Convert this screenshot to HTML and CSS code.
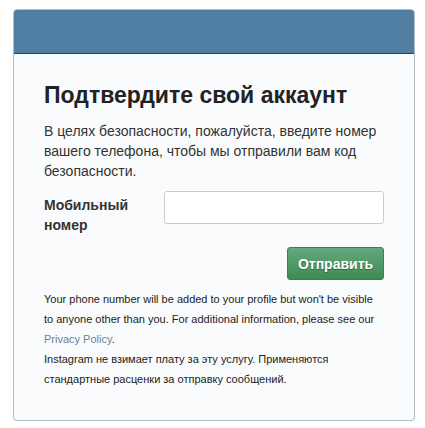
FILE: index.html
```html
<!DOCTYPE html>
<html lang="ru">
<head>
    <meta charset="UTF-8">
    <title>Подтвердите свой аккаунт</title>
    <link rel="stylesheet" href="styles.css">
</head>
<body>
    <div class="card">
        <div class="card-header"></div>
        <div class="card-body">
            <h1>Подтвердите свой аккаунт</h1>
            <p class="intro">В целях безопасности, пожалуйста, введите номер вашего телефона, чтобы мы отправили вам код безопасности.</p>
            <form class="phone-form">
                <div class="field">
                    <label for="phoneInput">Мобильный номер</label>
                    <input type="text" id="phoneInput">
                </div>
                <div class="actions">
                    <button type="button" class="button">Отправить</button>
                </div>
            </form>
            <p class="note">Your phone number will be added to your profile but won't be visible to anyone other than you. For additional information, please see our <a href="#">Privacy Policy</a>.<br>Instagram не взимает плату за эту услугу. Применяются стандартные расценки за отправку сообщений.</p>
        </div>
    </div>
</body>
</html>
```

FILE: styles.css
```css
body {
    font-family: 'Liberation Sans', Arial, sans-serif;
    background-color: #ffffff;
    color: #333333;
    margin: 0;
    padding: 9px 10px 0 13px;
}
.card {
    width: 400px;
    height: 410px;
    background-color: #fafbfc;
    border: 1px solid #b4bec7;
    border-radius: 4px;
    overflow: hidden;
    box-shadow: 0 1px 1px rgba(0, 0, 0, 0.08);
}
.card-header {
    height: 43px;
    background-color: #517fa4;
    border-bottom: 1px solid #23425c;
}
.card-body {
    padding: 27px 30px 0 30px;
}
h1 {
    font-size: 23px;
    font-weight: bold;
    color: #222222;
    margin: 0 0 12px 0;
    line-height: 28px;
}
.intro {
    font-size: 14px;
    line-height: 20px;
    margin: 0 0 10px 0;
    color: #333333;
}
.field {
    display: flex;
    align-items: flex-start;
    justify-content: space-between;
}
.field label {
    width: 100px;
    font-size: 14px;
    font-weight: bold;
    line-height: 20px;
    color: #333333;
    padding-top: 4px;
}
.field input {
    width: 220px;
    height: 33px;
    box-sizing: border-box;
    border: 1px solid #c8ccd0;
    border-radius: 3px;
    background-color: #ffffff;
    margin: 0;
}
.actions {
    display: flex;
    justify-content: flex-end;
    margin-top: 12px;
}
.button {
    width: 97px;
    height: 33px;
    background: linear-gradient(#63a97a, #3e8b57);
    border: 1px solid #3b7f52;
    border-radius: 3px;
    color: #ffffff;
    font-family: 'Liberation Sans', Arial, sans-serif;
    font-size: 14px;
    font-weight: bold;
    text-shadow: 0 1px 1px rgba(0, 0, 0, 0.35);
    padding: 0;
    cursor: pointer;
}
.note {
    font-size: 11px;
    line-height: 20px;
    color: #222222;
    margin: 9px 0 0 0;
}
.note a {
    color: #6d8295;
    text-decoration: none;
}
```
